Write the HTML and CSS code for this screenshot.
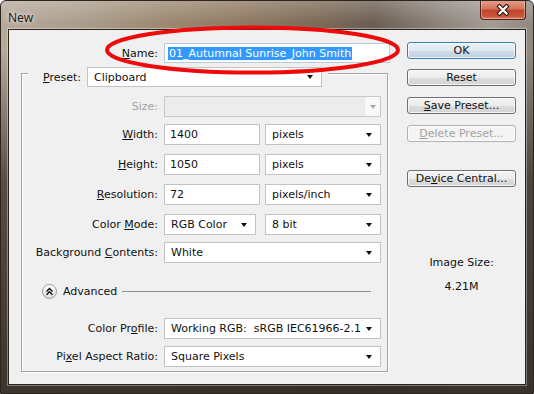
FILE: index.html
```html
<!DOCTYPE html>
<html lang="en">
<head>
    <meta charset="UTF-8">
    <title>New</title>
    <link rel="stylesheet" href="styles.css">
</head>
<body>
<div class="window">
    <div class="titlebar">
        <span class="title">New</span>
        <div class="close-btn">
            <svg width="14" height="12" viewBox="0 0 14 12">
                <path d="M3.5 2.5 L10.5 9.5 M10.5 2.5 L3.5 9.5" stroke="#3a1710" stroke-width="4.4" stroke-linecap="square"/>
                <path d="M3.5 2.5 L10.5 9.5 M10.5 2.5 L3.5 9.5" stroke="#fff" stroke-width="2.2" stroke-linecap="square"/>
            </svg>
        </div>
    </div>

    <div class="client">
        <div class="main">
            <div class="name-row">
                <label class="lbl"><u>N</u>ame:</label>
                <div class="input name-input"><span class="selected">01_Autumnal Sunrise_John Smith</span></div>
            </div>

            <div class="group">
                <div class="preset-row">
                    <label class="preset-lbl"><u>P</u>reset:</label>
                    <div class="combo preset-combo"><span class="val">Clipboard</span><i class="arrow"></i></div>
                </div>

                <div class="row">
                    <label class="lbl disabled">Size:</label>
                    <div class="combo off"><span class="val"></span><span class="arrow-box"><i class="arrow"></i></span></div>
                </div>
                <div class="row tight">
                    <label class="lbl"><u>W</u>idth:</label>
                    <div class="pair">
                        <div class="input num">1400</div>
                        <div class="combo unit"><span class="val">pixels</span><i class="arrow"></i></div>
                    </div>
                </div>
                <div class="row">
                    <label class="lbl"><u>H</u>eight:</label>
                    <div class="pair">
                        <div class="input num">1050</div>
                        <div class="combo unit"><span class="val">pixels</span><i class="arrow"></i></div>
                    </div>
                </div>
                <div class="row">
                    <label class="lbl"><u>R</u>esolution:</label>
                    <div class="pair">
                        <div class="input num">72</div>
                        <div class="combo unit"><span class="val">pixels/inch</span><i class="arrow"></i></div>
                    </div>
                </div>
                <div class="row">
                    <label class="lbl">Color <u>M</u>ode:</label>
                    <div class="pair wide-gap">
                        <div class="combo mode"><span class="val">RGB Color</span><i class="arrow"></i></div>
                        <div class="combo unit"><span class="val">8 bit</span><i class="arrow"></i></div>
                    </div>
                </div>
                <div class="row tight">
                    <label class="lbl">Background <u>C</u>ontents:</label>
                    <div class="combo"><span class="val">White</span><i class="arrow"></i></div>
                </div>

                <div class="advanced">
                    <span class="toggle">
                        <svg width="9" height="9" viewBox="0 0 9 9">
                            <path d="M1.5 4.5 L4.5 1.5 L7.5 4.5 M1.5 7.8 L4.5 4.8 L7.5 7.8" fill="none" stroke="#111" stroke-width="1.4"/>
                        </svg>
                    </span>
                    <span class="adv-text">Advanced</span>
                    <span class="adv-line"></span>
                </div>

                <div class="row profile">
                    <label class="lbl">Color Pr<u>o</u>file:</label>
                    <div class="combo"><span class="val">Working RGB:&nbsp; sRGB IEC61966-2.1</span><i class="arrow"></i></div>
                </div>
                <div class="row tight">
                    <label class="lbl">Pi<u>x</u>el Aspect Ratio:</label>
                    <div class="combo"><span class="val">Square Pixels</span><i class="arrow"></i></div>
                </div>
            </div>
        </div>

        <div class="side">
            <button class="btn default">OK</button>
            <button class="btn">Reset</button>
            <button class="btn"><u>S</u>ave Preset...</button>
            <button class="btn" disabled><u>D</u>elete Preset...</button>
            <button class="btn device">De<u>v</u>ice Central...</button>

            <div class="image-size">
                <div>Image Size:</div>
                <div class="size-val">4.21M</div>
            </div>
        </div>
    </div>

    <svg class="highlight" width="297" height="51" viewBox="0 0 297 51">
        <ellipse cx="148.5" cy="25" rx="145.5" ry="22.5" fill="none" stroke="#ee0a0a" stroke-width="4"/>
    </svg>
</div>
</body>
</html>
```

FILE: styles.css
```css
body {
    margin: 0;
    background: #fff;
    font-family: "DejaVu Sans", Tahoma, "Liberation Sans", sans-serif;
    font-size: 11px;
    color: #111;
}
u {
    text-decoration: underline;
    text-underline-offset: 1px;
}
.window {
    position: relative;
    width: 534px;
    height: 394px;
    box-sizing: border-box;
    padding: 0 7px 8px 7px;
    display: flex;
    flex-direction: column;
    border: 1px solid #2c241d;
    border-radius: 6px 6px 0 0;
    background:
        linear-gradient(to bottom, rgba(255,255,255,0.22), rgba(255,255,255,0) 22px),
        linear-gradient(to bottom, rgba(40,32,26,0) 50px, rgba(46,38,31,0.7) 180px, rgba(46,40,34,0.9) 100%),
        linear-gradient(to right, #b7aa9b 0%, #ab9d8c 15%, #9a866e 33%, #8f7a63 45%, #7c6957 60%, #6c5e53 70%, #8b827a 82%, #a49d96 92%, #8f8881 100%);
    overflow: hidden;
}
.titlebar {
    height: 28px;
    display: flex;
    justify-content: space-between;
    align-items: flex-start;
}
.title {
    padding: 8px 0 0 0;
    font-family: "Noto Sans", "Open Sans", sans-serif;
    font-size: 12px;
    color: #1a1a1a;
    text-shadow: 0 0 6px rgba(255,255,255,0.8), 0 0 3px rgba(255,255,255,0.6);
}
.close-btn {
    width: 46px;
    height: 20px;
    margin-top: -1px;
    box-sizing: border-box;
    border: 1px solid #4a2219;
    border-top: none;
    border-radius: 0 0 4px 4px;
    background: linear-gradient(to bottom, #e4a290 0%, #d6735c 45%, #c0452a 55%, #c9553a 85%, #e0806a 100%);
    box-shadow: inset 0 0 0 1px rgba(255,220,210,0.45);
    display: flex;
    align-items: center;
    justify-content: center;
}
.client {
    flex: 1;
    display: flex;
    border: 1px solid #2a221b;
    background: #f0f0f0;
    box-shadow: 0 0 0 1px rgba(255,255,255,0.35);
}
.main {
    width: 379px;
    padding: 13px 0 0 12px;
    box-sizing: border-box;
}
.name-row {
    display: grid;
    grid-template-columns: 137px 226px;
    column-gap: 6px;
    align-items: center;
}
.lbl {
    text-align: right;
    white-space: nowrap;
}
.lbl.disabled {
    color: #a3a3a3;
}
.input, .combo {
    height: 21px;
    box-sizing: border-box;
    border: 1px solid #c3c3c3;
    background: #fff;
    display: flex;
    align-items: center;
    white-space: nowrap;
}
.name-input {
    height: 20px;
    padding-left: 3px;
    border-color: #b9c9d9;
}
.selected {
    background: #3399ff;
    color: #fff;
    line-height: 13px;
    padding: 0 1px;
}
.group {
    margin-top: 10px;
    width: 367px;
    box-sizing: border-box;
    border: 1px solid #a2a2a2;
    box-shadow: inset 1px 1px 0 #fff, 1px 1px 0 #fff;
    padding: 0 6px 4px 0;
}
.preset-row {
    margin: -7px 0 0 6px;
    padding: 0 6px 0 15px;
    width: fit-content;
    display: flex;
    align-items: center;
    gap: 6px;
    background: #f0f0f0;
}
.preset-lbl {
    width: 38px;
    white-space: nowrap;
}
.preset-combo {
    width: 235px;
    height: 20px;
}
.val {
    flex: 1;
    padding-left: 6px;
}
.arrow {
    width: 0;
    height: 0;
    margin-right: 8px;
    border-top: 4px solid #111;
    border-left: 3.5px solid transparent;
    border-right: 3.5px solid transparent;
}
.row {
    margin-top: 9px;
    display: grid;
    grid-template-columns: 136px 217px;
    column-gap: 6px;
    align-items: center;
}
.row.tight {
    margin-top: 7px;
}
.row.profile {
    margin-top: 19px;
}
.combo.off {
    background: #ececec;
    border-color: #c9c9c9;
}
.arrow-box {
    width: 15px;
    height: 19px;
    background: #f8f8f8;
    display: flex;
    align-items: center;
    justify-content: center;
}
.arrow-box .arrow {
    margin: 0;
    border-top-color: #a8a8a8;
}
.pair {
    display: flex;
    gap: 5px;
}
.pair.wide-gap {
    gap: 9px;
}
.num {
    width: 96px;
    padding-left: 5px;
}
.unit {
    width: 116px;
}
.mode {
    width: 92px;
}
.advanced {
    margin-top: 20px;
    height: 16px;
    padding: 0 10px 0 20px;
    display: flex;
    align-items: center;
}
.toggle {
    width: 15px;
    height: 15px;
    box-sizing: border-box;
    border: 1px solid #9a9a9a;
    border-radius: 50%;
    background: linear-gradient(#ffffff, #dcdcdc);
    display: flex;
    align-items: center;
    justify-content: center;
}
.adv-text {
    margin-left: 6px;
}
.adv-line {
    flex: 1;
    margin-left: 5px;
    border-top: 1px solid #8e8e8e;
}
.side {
    padding: 12px 0 0 19px;
    display: flex;
    flex-direction: column;
    width: 128px;
}
.btn {
    width: 109px;
    height: 17px;
    margin: 0 0 11px 0;
    padding: 0;
    box-sizing: border-box;
    border: 1px solid #707070;
    border-radius: 3px;
    background: linear-gradient(to bottom, #f4f4f4 0%, #ececec 50%, #dedede 51%, #d3d3d3 100%);
    box-shadow: inset 0 0 0 1px rgba(255,255,255,0.75);
    font: inherit;
    color: #111;
    line-height: 15px;
}
.btn.default {
    margin-bottom: 10px;
    border-color: #3c7fb1;
    background: linear-gradient(to bottom, #e9f1f8 0%, #dfe9f2 50%, #cedbe7 51%, #c3d2e0 100%);
}
.btn:disabled {
    border-color: #adb2b5;
    color: #a3a3a3;
    background: #f4f4f4;
}
.btn.device {
    margin-top: 17px;
}
.image-size {
    width: 109px;
    margin-top: 58px;
    text-align: center;
}
.size-val {
    margin-top: 11px;
}
.highlight {
    position: absolute;
    left: 103px;
    top: 24px;
}
```
